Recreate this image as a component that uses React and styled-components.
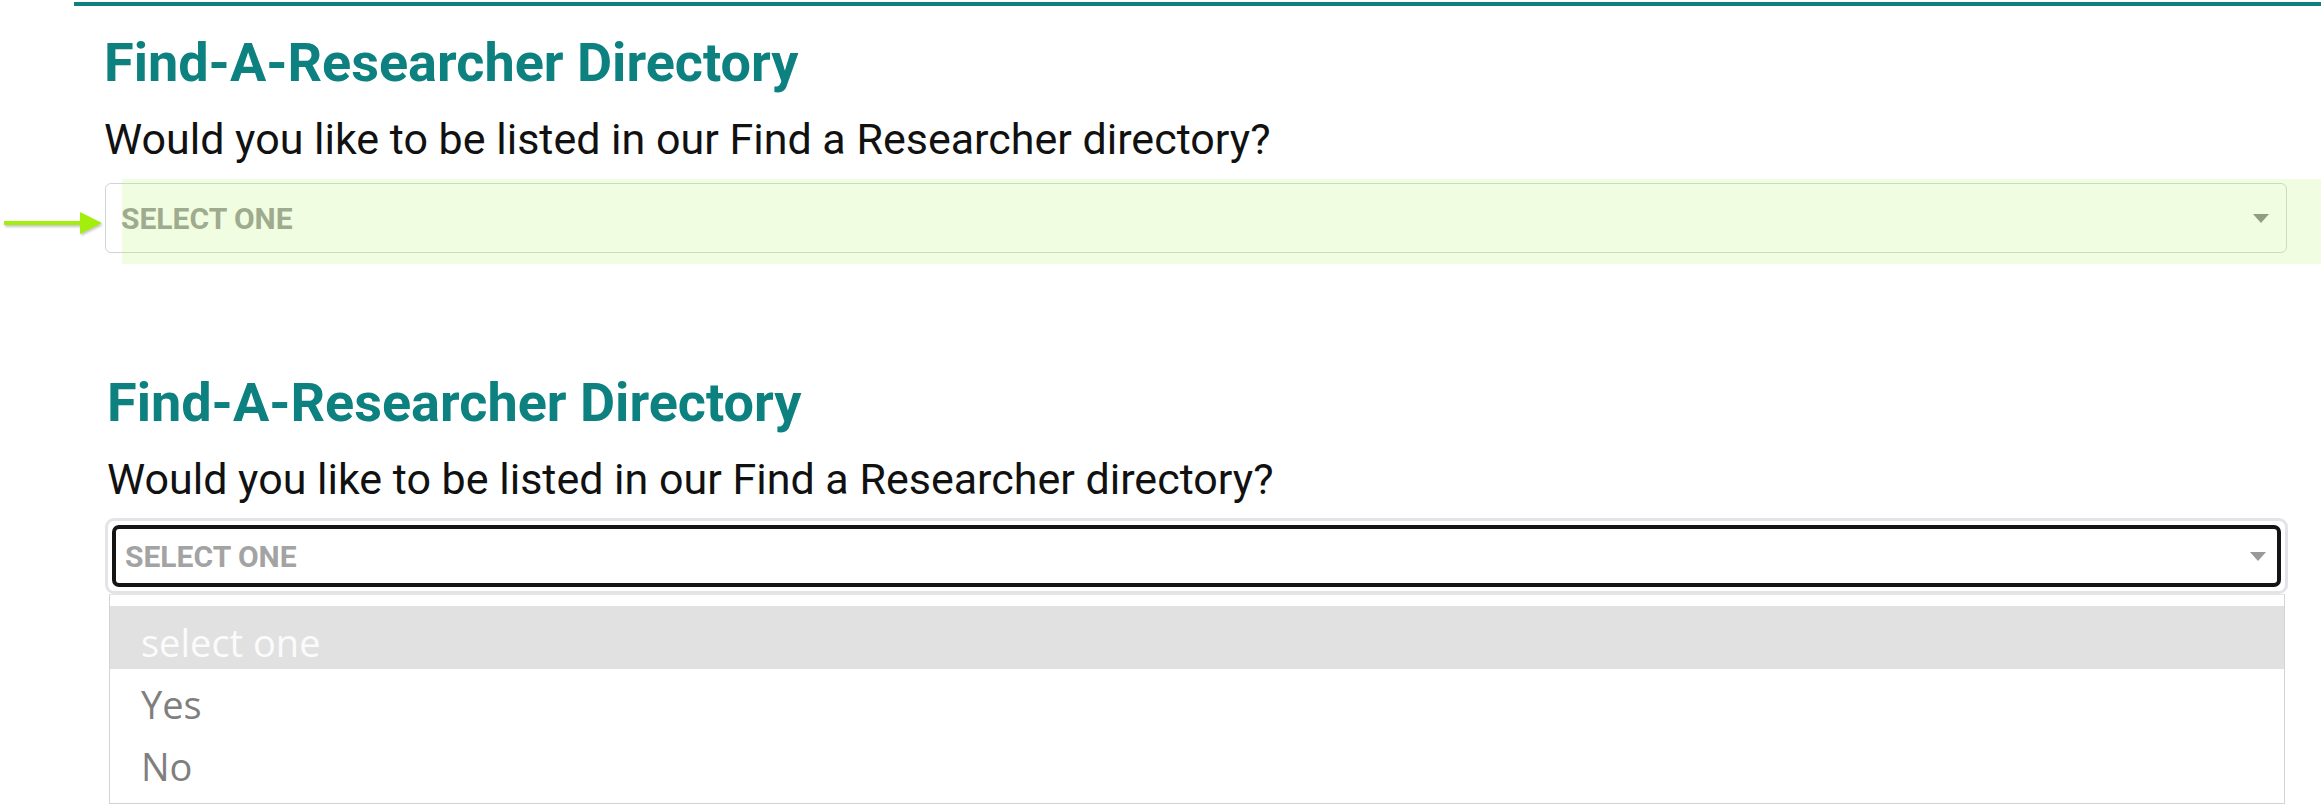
import React from 'react';
import styled, { createGlobalStyle } from 'styled-components';

const GlobalStyle = createGlobalStyle`
  html, body {
    margin: 0;
    padding: 0;
    background: #fff;
    overflow: hidden;
  }
  body {
    font-family: Roboto, "Liberation Sans", sans-serif;
  }
`;

const Page = styled.div`
  width: 2321px;
  height: 807px;
  padding-top: 2px;
  box-sizing: border-box;
  overflow: hidden;
`;

const Section = styled.section`
  margin-left: ${(p) => (p.$ruled ? '74px' : '0')};
  margin-top: ${(p) => p.$gap || 0}px;
  padding: ${(p) => (p.$ruled ? '25px 34px 0 31px' : '0 33px 0 105px')};
  border-top: ${(p) => (p.$ruled ? '4px solid #0e8080' : 'none')};
`;

const Title = styled.h2`
  margin: 0 0 0 ${(p) => p.$indent || 0}px;
  font: 700 54px/64px Roboto, "Liberation Sans", sans-serif;
  color: #0d8080;
`;

const Question = styled.p`
  margin: 19px 0 0 ${(p) => p.$indent || 0}px;
  font: 400 43px/51px Roboto, "Liberation Sans", sans-serif;
  color: #111;
`;

const Field = styled.div`
  position: relative;
  margin-top: ${(p) => p.$gap}px;
`;

const SelectBox = styled.div`
  height: 70px;
  box-sizing: border-box;
  display: flex;
  align-items: center;
  justify-content: space-between;
  padding: 0 17px 0 15px;
  border: 1px solid #cfd4dc;
  border-radius: 6px;
  background: #fff;
  font: 700 30px Roboto, "Liberation Sans", sans-serif;
  color: #999;
`;

const FocusRing = styled.div`
  border: 3px solid #e2e4e8;
  border-radius: 9px;
  padding: 4px;
  background: #fff;
`;

const FocusedBox = styled(SelectBox)`
  height: 62px;
  padding: 0 11px 0 9px;
  border: 4px solid #141414;
  border-radius: 7px;
  color: #a3a3a3;
`;

const Caret = styled.span`
  width: 0;
  height: 0;
  border-left: 8px solid transparent;
  border-right: 8px solid transparent;
  border-top: 9px solid ${(p) => p.$color || '#888'};
`;

const Highlight = styled.div`
  position: absolute;
  left: 17px;
  top: -4px;
  right: -34px;
  bottom: -11px;
  background: rgba(185, 245, 100, 0.2);
  pointer-events: none;
`;

const Pointer = styled.svg`
  position: absolute;
  left: -101px;
  top: 28px;
  filter: drop-shadow(1px 2px 1px rgba(0, 0, 0, 0.22));
`;

const OptionList = styled.ul`
  list-style: none;
  margin: 0 3px 0 4px;
  padding: 11px 0 10px;
  border: 1px solid #d3d3d3;
  border-top-color: #e6e6e6;
  background: #fff;
`;

const Option = styled.li`
  height: ${(p) => (p.$active ? 63 : 62)}px;
  box-sizing: border-box;
  padding: 9px 0 0 31px;
  font-family: "Open Sans", "Liberation Sans", sans-serif;
  font-size: 38px;
  line-height: ${(p) => (p.$active ? 54 : 53)}px;
  background: ${(p) => (p.$active ? '#e1e1e1' : 'transparent')};
  color: ${(p) => (p.$active ? '#fbfbfb' : '#7f7f7f')};
`;

const options = ['select one', 'Yes', 'No'];

function GreenArrow() {
  return (
    <Pointer width="100" height="26" viewBox="0 0 100 26">
      <rect x="0" y="10" width="80" height="4" fill="#a3ee0c" />
      <polygon points="76,1 98,12 76,23" fill="#a3ee0c" />
    </Pointer>
  );
}

function App() {
  return (
    <Page>
      <GlobalStyle />
      <Section $ruled>
        <Title $indent={-1}>Find-A-Researcher Directory</Title>
        <Question $indent={-1}>Would you like to be listed in our Find a Researcher directory?</Question>
        <Field $gap={18}>
          <SelectBox>
            SELECT ONE
            <Caret />
          </SelectBox>
          <Highlight />
          <GreenArrow />
        </Field>
      </Section>

      <Section $gap={118}>
        <Title $indent={2}>Find-A-Researcher Directory</Title>
        <Question $indent={2}>Would you like to be listed in our Find a Researcher directory?</Question>
        <Field $gap={13}>
          <FocusRing>
            <FocusedBox>
              SELECT ONE
              <Caret $color="#999" />
            </FocusedBox>
          </FocusRing>
          <OptionList>
            {options.map((o, i) => (
              <Option key={o} $active={i === 0}>
                {o}
              </Option>
            ))}
          </OptionList>
        </Field>
      </Section>
    </Page>
  );
}

export default App;
